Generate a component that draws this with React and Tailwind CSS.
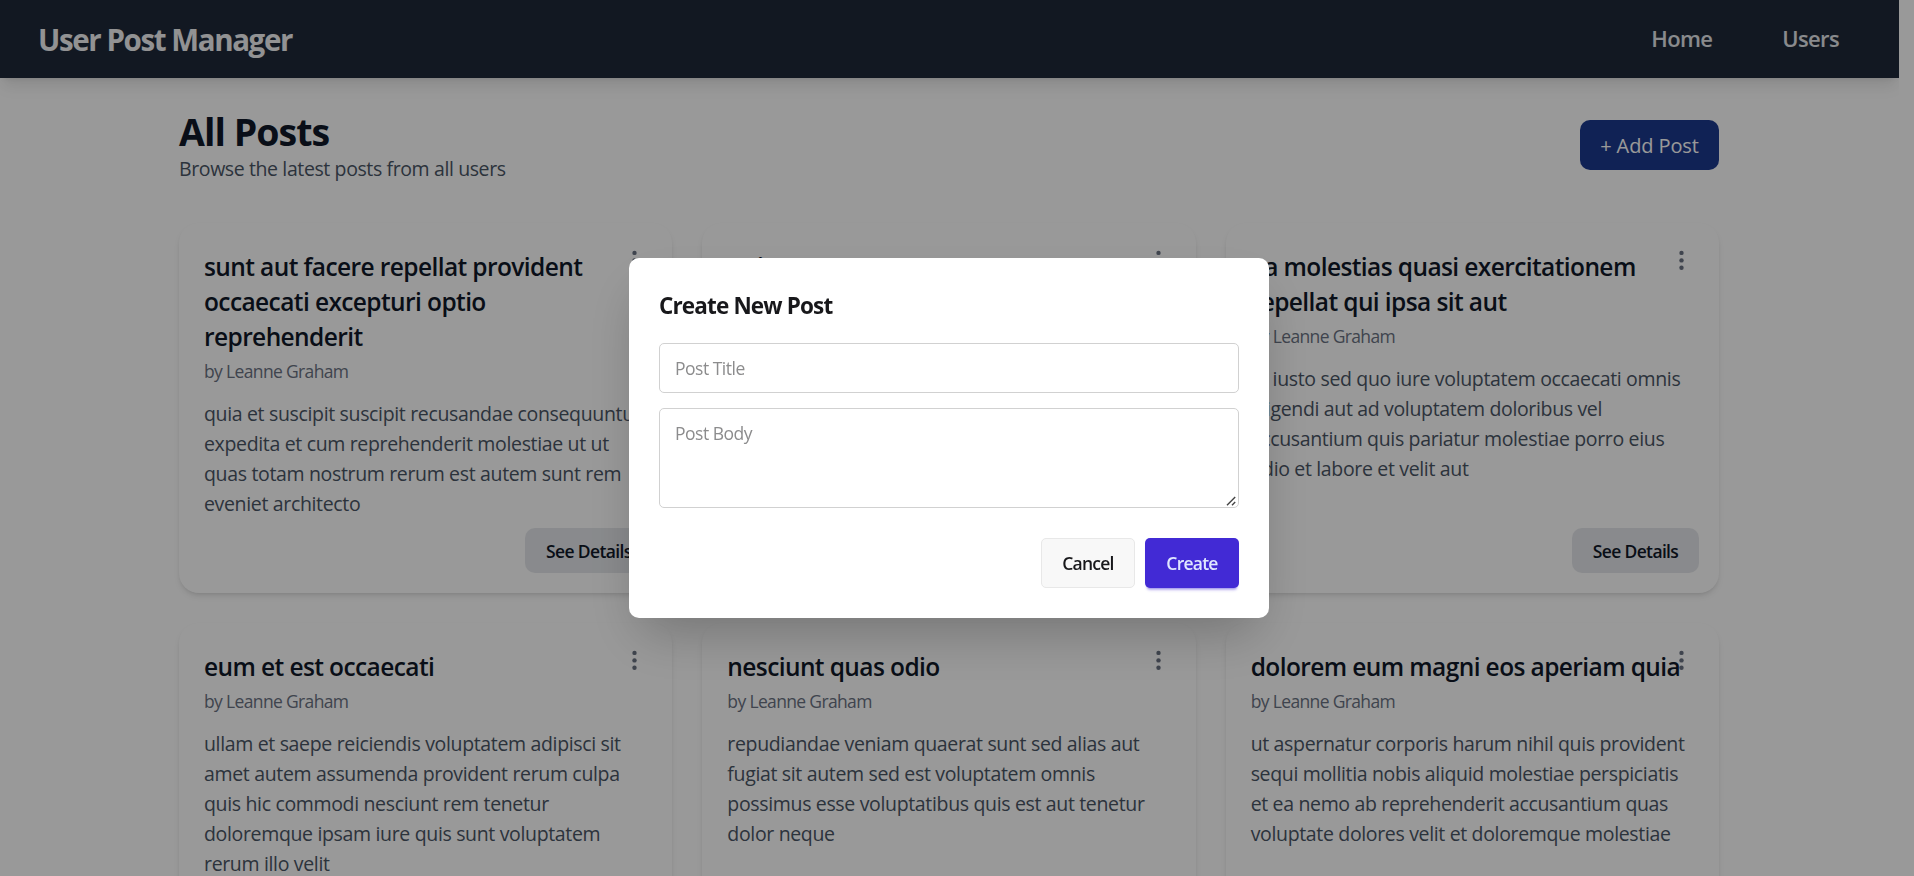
import React from "react";

const posts = [
  {
    title: ["sunt aut facere repellat provident", "occaecati excepturi optio", "reprehenderit"],
    body: [
      "quia et suscipit suscipit recusandae consequuntur",
      "expedita et cum reprehenderit molestiae ut ut",
      "quas totam nostrum rerum est autem sunt rem",
      "eveniet architecto",
    ],
  },
  {
    title: ["qui est esse"],
    body: [
      "est rerum tempore vitae sequi sint nihil",
      "reprehenderit dolor beatae ea dolores neque",
      "fugiat blanditiis voluptate porro vel nihil",
      "molestiae ut reiciendis qui aperiam non debitis",
      "possimus qui neque nisi nulla",
    ],
  },
  {
    title: ["ea molestias quasi exercitationem", "repellat qui ipsa sit aut"],
    body: [
      "et iusto sed quo iure voluptatem occaecati omnis",
      "eligendi aut ad voluptatem doloribus vel",
      "accusantium quis pariatur molestiae porro eius",
      "odio et labore et velit aut",
    ],
  },
  {
    title: ["eum et est occaecati"],
    body: [
      "ullam et saepe reiciendis voluptatem adipisci sit",
      "amet autem assumenda provident rerum culpa",
      "quis hic commodi nesciunt rem tenetur",
      "doloremque ipsam iure quis sunt voluptatem",
      "rerum illo velit",
    ],
  },
  {
    title: ["nesciunt quas odio"],
    body: [
      "repudiandae veniam quaerat sunt sed alias aut",
      "fugiat sit autem sed est voluptatem omnis",
      "possimus esse voluptatibus quis est aut tenetur",
      "dolor neque",
    ],
  },
  {
    title: ["dolorem eum magni eos aperiam quia"],
    body: [
      "ut aspernatur corporis harum nihil quis provident",
      "sequi mollitia nobis aliquid molestiae perspiciatis",
      "et ea nemo ab reprehenderit accusantium quas",
      "voluptate dolores velit et doloremque molestiae",
    ],
  },
];

function Lines({ lines }) {
  return lines.map((line) => (
    <span key={line} className="block whitespace-nowrap">
      {line}
    </span>
  ));
}

function PostCard({ post }) {
  return (
    <article className="relative flex flex-col rounded-[20px] bg-white px-[25px] pt-[26px] pb-5 shadow-md">
      <button className="absolute top-[25px] right-[25px] flex size-[25px] items-center justify-center text-gray-500">
        <svg width="5" height="20" viewBox="0 0 5 20" fill="currentColor">
          <circle cx="2.5" cy="2.9" r="2.2" />
          <circle cx="2.5" cy="10.4" r="2.2" />
          <circle cx="2.5" cy="17.8" r="2.2" />
        </svg>
      </button>
      <h2 className="text-[24.5px] leading-[35px] font-semibold tracking-[-0.6px] text-gray-900">
        <Lines lines={post.title} />
      </h2>
      <p className="mt-[5px] text-[17.5px] leading-[25px] tracking-[-0.65px] text-gray-500">by Leanne Graham</p>
      <p className="mt-[15px] text-[19.5px] leading-[30px] tracking-[-0.34px] text-gray-600">
        <Lines lines={post.body} />
      </p>
      <div className="mt-auto -mr-[5px] flex justify-end pt-[9px]">
        <button className="h-[45px] w-[127px] rounded-[10px] bg-gray-200 pt-0.5 text-[17.5px] font-semibold tracking-[-0.65px] text-gray-900">
          See Details
        </button>
      </div>
    </article>
  );
}

function CreatePostModal() {
  return (
    <div className="fixed inset-0 flex items-center justify-center bg-black/40 pr-4">
      <div className="w-[640px] rounded-[10px] bg-white p-[30px] shadow-2xl">
        <h3 className="mb-5 text-[22.5px] leading-[35px] font-bold tracking-[-0.85px] text-zinc-900">Create New Post</h3>
        <input
          placeholder="Post Title"
          className="block h-[50px] w-full rounded-[5px] border border-[#d1d1d1] px-[15px] text-[17.5px] tracking-[-0.5px] outline-none placeholder:text-[#8c8c8d]"
        />
        <div className="relative mt-[15px]">
          <textarea
            placeholder="Post Body"
            className="block h-[100px] w-full resize-none rounded-[5px] border border-[#d1d1d1] px-[15px] py-[10px] text-[17.5px] leading-[28px] tracking-[-0.5px] outline-none placeholder:text-[#8c8c8d]"
          />
          <svg
            className="absolute right-[2px] bottom-[2px]"
            width="11"
            height="10"
            viewBox="0 0 11 10"
            stroke="#444"
            strokeWidth="1.4"
          >
            <path d="M1 9.2 9.2 1M6 9.2 9.2 6" />
          </svg>
        </div>
        <div className="mt-[30px] flex justify-end gap-2.5">
          <button className="h-[50px] w-[94px] rounded-[5px] border border-[#e8e8e8] bg-[#f8f8f8] text-[17.5px] font-semibold tracking-[-0.75px] text-zinc-900">
            Cancel
          </button>
          <button className="h-[50px] w-[94px] rounded-[5px] bg-[#422ad5] text-[17.5px] font-semibold tracking-[-0.75px] text-[#e0e7ff] shadow-[0_3px_2px_-2px_rgba(66,42,213,0.3),0_4px_3px_-2px_rgba(66,42,213,0.3)]">
            Create
          </button>
        </div>
      </div>
    </div>
  );
}

export default function App() {
  return (
    <div className="h-screen overflow-hidden bg-white pr-[15px] font-['Open_Sans',sans-serif]">
      <div className="h-full overflow-hidden">
        <nav className="relative flex h-[77.5px] items-center justify-between bg-gray-800 pr-[60px] pl-[38px] text-white shadow-lg">
          <span className="pt-0.5 text-[29.5px] leading-[37.5px] font-bold tracking-[-1.4px] text-gray-100">
            User Post Manager
          </span>
          <div className="flex items-center gap-[70px] text-[22px] leading-[35px] font-semibold tracking-[-0.65px] text-gray-200">
            <a>Home</a>
            <a>Users</a>
          </div>
        </nav>
        <main className="ml-[179px] w-[1540px] pt-[30px]">
          <header className="mb-10 flex items-center justify-between">
            <div className="pt-px">
              <h1 className="text-[37.5px] leading-[45px] font-bold tracking-[-0.95px] text-gray-900">All Posts</h1>
              <p className="-mb-px text-[19.5px] leading-[30px] tracking-[-0.39px] text-gray-600">
                Browse the latest posts from all users
              </p>
            </div>
            <button className="h-[50px] w-[139px] rounded-[10px] bg-blue-900 pt-px text-[20px] tracking-[-0.1px] text-white">
              + Add Post
            </button>
          </header>
          <section className="grid grid-cols-3 gap-[30px]">
            {posts.map((post) => (
              <PostCard key={post.title[0]} post={post} />
            ))}
          </section>
        </main>
      </div>
      <CreatePostModal />
    </div>
  );
}
